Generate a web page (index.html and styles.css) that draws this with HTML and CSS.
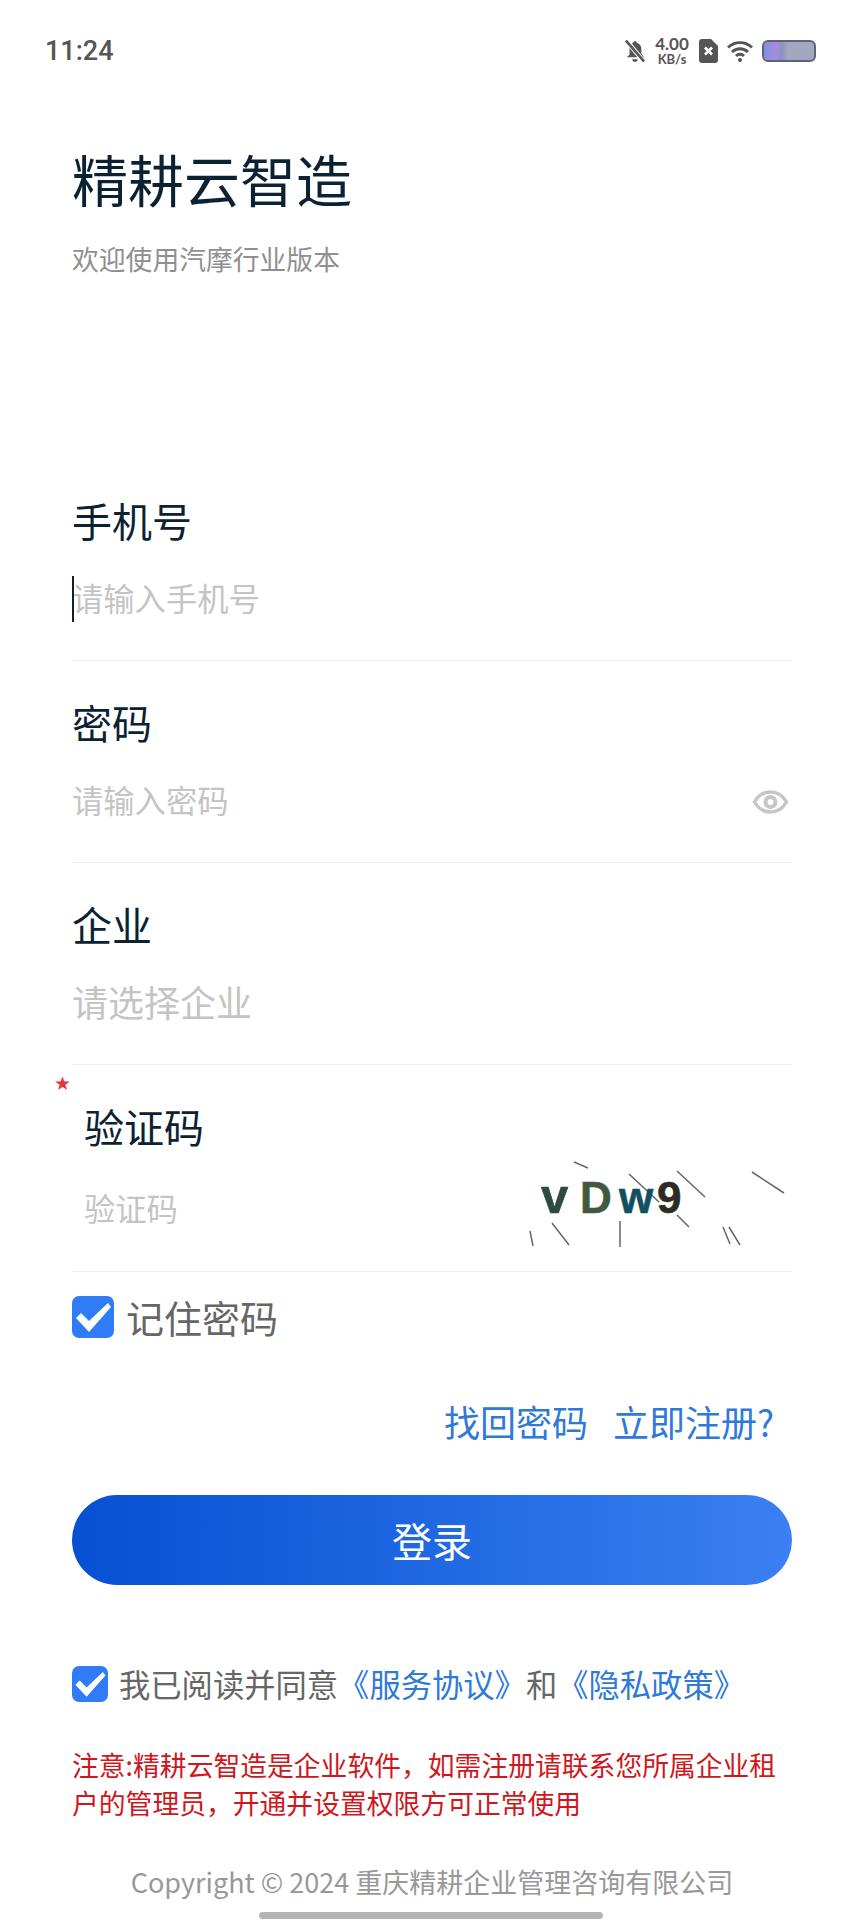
FILE: index.html
```html
<!DOCTYPE html>
<html lang="zh-CN">
<head>
    <meta charset="UTF-8">
    <meta name="viewport" content="width=device-width, initial-scale=1.0">
    <title>精耕云智造</title>
    <link rel="stylesheet" href="styles.css">
</head>
<body>
    <div class="screen">
        <div class="statusbar">
            <span class="clock">11:24</span>
            <div class="status-icons">
                <svg width="20" height="24" viewBox="0 0 22 26">
                    <path d="M11 2c1 0 2 1 2 2 3.500 1 5 4 5 7v5l3 4H2l3-3 0-6c0-4 2-6 4-7 0-1 1-2 2-2z" fill="#555"/>
                    <path d="M8 22h6c0 2-1.500 3-3 3s-3-1-3-3z" fill="#555"/>
                    <path d="M2 2l19 23" stroke="#fff" stroke-width="5"/>
                    <path d="M1 1.500l20 23" stroke="#555" stroke-width="3"/>
                </svg>
                <div class="netspeed">
                    <span class="netspeed-num">4.00</span>
                    <span class="netspeed-unit">KB/s</span>
                </div>
                <svg width="19" height="24" viewBox="0 0 19 24">
                    <path d="M3 0h9l7 7v14a3 3 0 0 1-3 3H3a3 3 0 0 1-3-3V3a3 3 0 0 1 3-3z" fill="#555"/>
                    <path d="M6 8.500l7 7M13 8.500l-7 7" stroke="#fff" stroke-width="2.600"/>
                </svg>
                <svg width="26" height="22" viewBox="0 0 26 22">
                    <path d="M1 7.500a17 17 0 0 1 24 0" fill="none" stroke="#555" stroke-width="2.800"/>
                    <path d="M5 12a11.500 11.500 0 0 1 16 0" fill="none" stroke="#555" stroke-width="2.800"/>
                    <path d="M9 16a5.500 5.500 0 0 1 8 0" fill="none" stroke="#555" stroke-width="2.800"/>
                    <circle cx="13" cy="20" r="2" fill="#555"/>
                </svg>
                <div class="battery"><div class="battery-fill"></div></div>
            </div>
        </div>

        <div class="heading">
            <h1>精耕云智造</h1>
            <p>欢迎使用汽摩行业版本</p>
        </div>

        <form class="login-form">
            <div class="field">
                <label>手机号</label>
                <div class="field-input">
                    <span class="caret"></span>
                    <span class="placeholder">请输入手机号</span>
                </div>
            </div>
            <div class="field">
                <label>密码</label>
                <div class="field-input">
                    <span class="placeholder">请输入密码</span>
                    <svg class="eye" width="37" height="26" viewBox="0 0 36 26">
                        <path d="M2 13C6 6 11.500 3 18 3s12 3 16 10c-4 7-9.500 10-16 10S6 20 2 13z" fill="none" stroke="#c6c6c6" stroke-width="3.500"/>
                        <circle cx="18" cy="13" r="5" fill="none" stroke="#c6c6c6" stroke-width="4"/>
                    </svg>
                </div>
            </div>
            <div class="field">
                <label>企业</label>
                <div class="field-input">
                    <span class="placeholder placeholder-lg">请选择企业</span>
                </div>
            </div>
            <div class="field field-code">
                <span class="required">★</span>
                <label>验证码</label>
                <div class="field-input">
                    <span class="placeholder">验证码</span>
                    <!-- generated captcha image -->
                    <svg class="captcha" width="270" height="100" viewBox="0 0 270 100">
                        <g fill="none" stroke="#666" stroke-width="1.500">
                            <path d="M54 7l14 6M109 19l30 28M157 16l28 26M232 17l32 21M157 60l12 12M32 68l17 22M10 76l3 15M100 66v26M203 72l7 17M209 72l11 18"/>
                        </g>
                        <text x="21" y="58" class="captcha-char captcha-wide c1">v</text>
                        <text x="60" y="58" class="captcha-char c2">D</text>
                        <text x="99" y="58" class="captcha-char c3">w</text>
                        <text x="137" y="58" class="captcha-char c4">9</text>
                    </svg>
                </div>
            </div>

            <div class="remember">
                <span class="check">
                    <svg width="42" height="42" viewBox="0 0 42 42"><path d="M4 22l5-5 8 8L36 7l3 4L17 36z" fill="#fff"/></svg>
                </span>
                <span>记住密码</span>
            </div>

            <div class="links">
                <a>找回密码</a>
                <a>立即注册?</a>
            </div>

            <button type="button" class="login-btn">登录</button>

            <div class="agree">
                <span class="check check-small">
                    <svg width="36" height="36" viewBox="0 0 42 42"><path d="M4 22l5-5 8 8L36 7l3 4L17 36z" fill="#fff"/></svg>
                </span>
                <span>我已阅读并同意<a>《服务协议》</a>和<a>《隐私政策》</a></span>
            </div>
        </form>

        <p class="notice">注意:精耕云智造是企业软件，如需注册请联系您所属企业租户的管理员，开通并设置权限方可正常使用</p>
        <p class="copyright">Copyright © 2024 重庆精耕企业管理咨询有限公司</p>
        <div class="home-bar"></div>
    </div>
</body>
</html>
```

FILE: styles.css
```css
* {
    box-sizing: border-box;
}
body {
    margin: 0;
    background-color: #fff;
    font-family: "Noto Sans CJK SC", "Noto Sans", sans-serif;
}
.screen {
    position: relative;
    width: 861px;
    height: 1920px;
    overflow: hidden;
    padding: 0 69px 0 72px;
}
.statusbar {
    display: flex;
    justify-content: space-between;
    align-items: center;
    height: 50px;
    margin: 26px -24px 0 -27px;
    color: #555;
}
.clock {
    font-family: "Roboto", sans-serif;
    font-size: 27px;
    font-weight: 500;
}
.status-icons {
    display: flex;
    align-items: center;
    gap: 9px;
}
.netspeed {
    display: flex;
    flex-direction: column;
    align-items: center;
    gap: 2px;
    width: 36px;
    font-family: "Lato", sans-serif;
    font-weight: 700;
}
.netspeed-num {
    font-size: 17px;
    line-height: 14px;
}
.netspeed-unit {
    font-size: 13px;
    line-height: 12px;
}
.battery {
    width: 54px;
    height: 22px;
    border: 2px solid #5e6478;
    border-radius: 6px;
    background-color: #a3a7bf;
    overflow: hidden;
}
.battery-fill {
    width: 24px;
    height: 100%;
    background: linear-gradient(to right, #7f93d8, #a78be0 50%, #8f8fc0 75%, #a3a7bf);
}
.heading {
    margin-top: 61px;
}
.heading h1 {
    margin: 0;
    font-size: 56px;
    line-height: 82px;
    font-weight: 400;
    color: #0b2233;
}
.heading p {
    margin: 20px 0 0;
    font-size: 26.8px;
    line-height: 40px;
    color: #8f8f8f;
}
.login-form {
    margin-top: 212px;
}
.field {
    height: 202px;
}
.field label {
    display: block;
    font-size: 40px;
    line-height: 58px;
    color: #0b2233;
}
.field-input {
    display: flex;
    justify-content: space-between;
    align-items: center;
    position: relative;
    width: 720px;
    height: 112px;
    padding-bottom: 15px;
    border-bottom: 1px solid #efefef;
}
.placeholder {
    font-size: 31.3px;
    color: #c4c4c4;
}
.placeholder-lg {
    font-size: 36px;
}
.caret {
    position: absolute;
    left: 0;
    top: 27px;
    width: 2px;
    height: 46px;
    background-color: #0b2233;
}
.eye {
    margin: 5px 3px 0 0;
}
.field-code {
    position: relative;
    height: 175px;
    padding-left: 12px;
}
.field-code .field-input {
    height: 117px;
    margin-left: -12px;
    padding: 0 0 12px 12px;
}
.required {
    position: absolute;
    left: -18px;
    top: -24px;
    font-family: "DejaVu Sans", sans-serif;
    font-size: 19px;
    line-height: 20px;
    color: #e5323f;
}
.captcha {
    position: absolute;
    right: 2px;
    top: 0;
}
.captcha-char {
    font-family: "Liberation Sans", sans-serif;
    font-weight: 700;
    font-size: 44px;
    stroke-width: 0.6px;
}
.captcha-wide {
    font-size: 49px;
}
.c1 { fill: #2f4a40; stroke: #2f4a40; }
.c2 { fill: #3f5a3c; stroke: #3f5a3c; }
.c3 { fill: #114f63; stroke: #114f63; }
.c4 { fill: #2c2c22; stroke: #2c2c22; }
.remember {
    display: flex;
    align-items: center;
    gap: 12px;
    margin-top: 24px;
    font-size: 38px;
    line-height: 42px;
    color: #666;
}
.check {
    display: flex;
    flex-shrink: 0;
    width: 42px;
    height: 42px;
    border-radius: 7px;
    background-color: #2f7cf6;
}
.check-small {
    width: 36px;
    height: 36px;
}
.links {
    display: flex;
    justify-content: flex-end;
    gap: 25px;
    width: 720px;
    margin-top: 57px;
    padding-right: 18px;
    font-size: 36px;
    line-height: 52px;
    color: #2f79d9;
}
.login-btn {
    display: block;
    width: 720px;
    height: 90px;
    margin-top: 48px;
    border: none;
    border-radius: 45px;
    background: linear-gradient(to right, #0650d2, #3a80f2);
    color: #fff;
    font-family: inherit;
    font-size: 40px;
}
.agree {
    display: flex;
    align-items: center;
    gap: 11px;
    margin-top: 81px;
    font-size: 31.3px;
    line-height: 36px;
    color: #666;
    white-space: nowrap;
}
.agree a {
    color: #2f79d9;
}
.notice {
    margin: 44px 0 0;
    width: 720px;
    font-size: 26.8px;
    line-height: 38px;
    color: #cf1720;
}
.copyright {
    margin: 40px 0 0;
    width: 720px;
    text-align: center;
    font-size: 27px;
    line-height: 40px;
    color: #989898;
}
.home-bar {
    position: absolute;
    left: 259px;
    bottom: 1px;
    width: 344px;
    height: 7px;
    border-radius: 4px;
    background-color: #b5b5b5;
}
```
